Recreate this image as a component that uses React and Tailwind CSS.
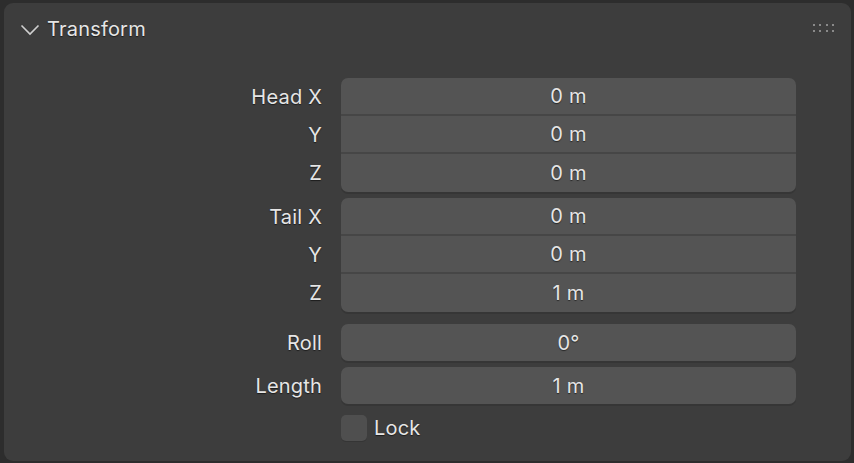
const font = { fontFamily: "Inter, 'Noto Sans', sans-serif" };

const groups = [
  [
    ["Head X", "0 m"],
    ["Y", "0 m"],
    ["Z", "0 m"],
  ],
  [
    ["Tail X", "0 m"],
    ["Y", "0 m"],
    ["Z", "1 m"],
  ],
];

const txt = "text-[#e6e6e6] [text-shadow:0_1px_1px_rgba(0,0,0,0.55)]";

function Field({ value, first, last, h = "h-[38px]" }) {
  return (
    <div
      className={`${h} w-[455px] bg-[#545454] flex items-center justify-center text-[20px] tracking-[0.2px] ${txt} ${
        first ? "rounded-t-[7px]" : ""
      } ${last ? "rounded-b-[7px] shadow-[0_2px_0_#363636]" : "border-b-2 border-[#464646]"}`}
    >
      {value}
    </div>
  );
}

function Label({ text, h = "h-[38px]" }) {
  return (
    <div className={`${h} w-[318px] flex items-center justify-end text-[20px] tracking-[0.2px] ${txt}`}>{text}</div>
  );
}

export default function App() {
  return (
    <div className="w-[854px] h-[463px] bg-[#2d2d2d] pt-[3px] pl-[4px]" style={font}>
      <div className="w-[847px] h-[458px] bg-[#3d3d3d] rounded-[9px] flex flex-col">
        <div className="h-[50px] flex items-center relative">
          <svg width="20" height="12" viewBox="0 0 20 12" className="ml-[16px] mt-[4px]">
            <path d="M1.5 1.5 L10 10 L18.5 1.5" fill="none" stroke="#d0d0d0" strokeWidth="1.6" />
          </svg>
          <span className={`ml-[7px] mt-[2px] text-[20px] tracking-[0.2px] ${txt}`}>Transform</span>
          <div className="absolute right-[17px] top-[21px] grid grid-cols-4 gap-x-[4.5px] gap-y-[4px]">
            {Array.from({ length: 8 }).map((_, i) => (
              <div key={i} className="w-[2px] h-[2px] bg-[#8a8a8a]" />
            ))}
          </div>
        </div>
        <div className="pt-[25px] flex flex-col">
          {groups.map((g, gi) => (
            <div key={gi} className={`flex ${gi ? "mt-[6px]" : ""}`}>
              <div className="flex flex-col">
                {g.map(([l], i) => (
                  <Label key={i} text={l} />
                ))}
              </div>
              <div className="ml-[19px] flex flex-col">
                {g.map(([, v], i) => (
                  <Field key={i} value={v} first={i === 0} last={i === g.length - 1} />
                ))}
              </div>
            </div>
          ))}
          <div className="flex mt-[12px]">
            <Label text="Roll" h="h-[37px]" />
            <div className="ml-[19px]">
              <Field value="0°" first last h="h-[37px]" />
            </div>
          </div>
          <div className="flex mt-[6px]">
            <Label text="Length" h="h-[37px]" />
            <div className="ml-[19px]">
              <Field value="1 m" first last h="h-[37px]" />
            </div>
          </div>
          <div className="flex items-center mt-[9px] ml-[337px]">
            <div className="w-[26px] h-[26px] rounded-[5px] bg-[#4f4f4f] shadow-[0_1px_0_#353535]" />
            <span className={`ml-[7px] text-[20px] tracking-[0.2px] ${txt}`}>Lock</span>
          </div>
        </div>
      </div>
    </div>
  );
}
